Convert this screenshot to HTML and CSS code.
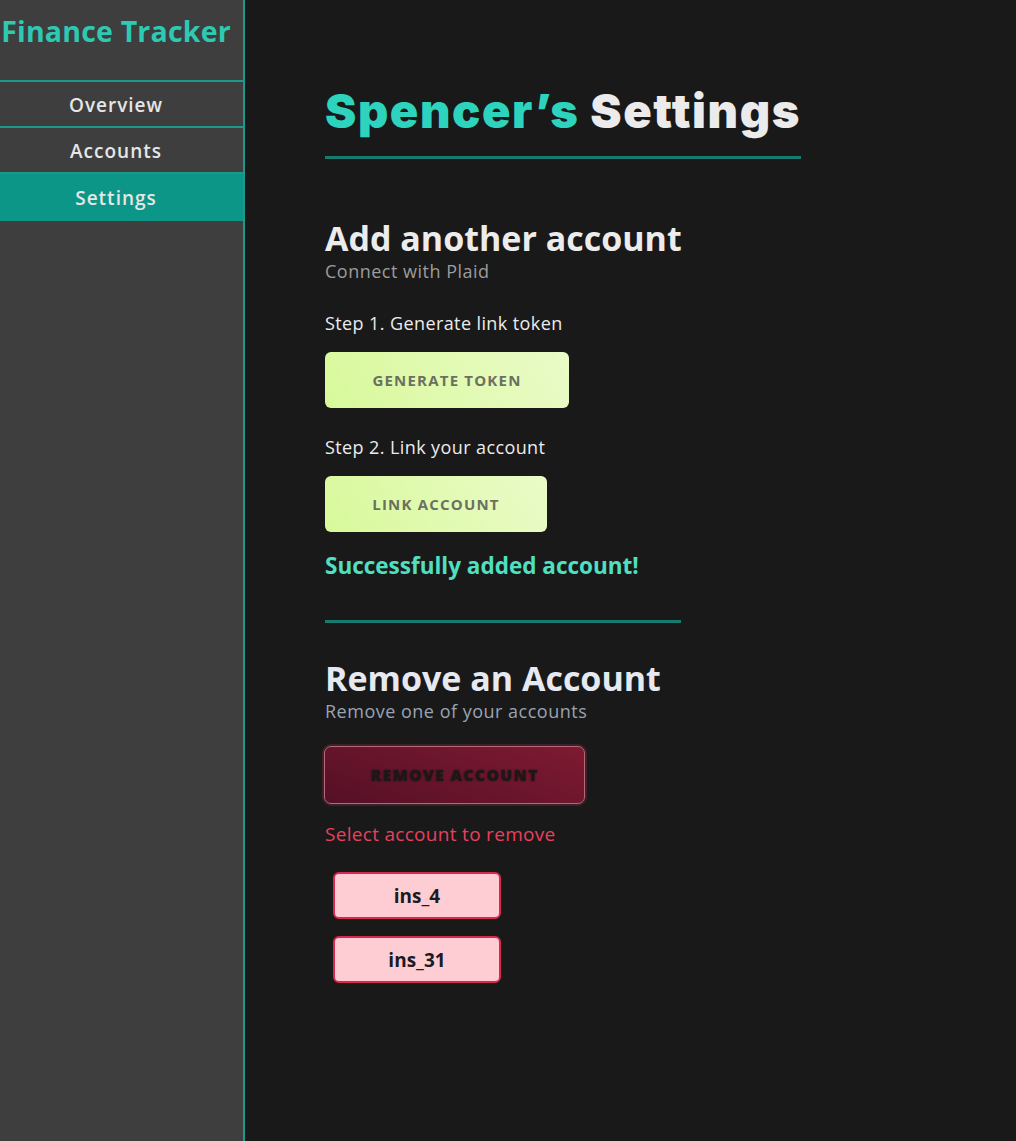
FILE: index.html
```html
<!DOCTYPE html>
<html lang="en">
<head>
<meta charset="utf-8">
<title>Finance Tracker – Settings</title>
<link rel="stylesheet" href="styles.css">
</head>
<body>
<div class="app">
  <aside class="sidebar">
    <div class="brand">Finance Tracker</div>
    <nav class="nav">
      <a class="nav-item">Overview</a>
      <a class="nav-item">Accounts</a>
      <a class="nav-item active">Settings</a>
    </nav>
  </aside>
  <main class="main">
    <h1 class="page-title"><span class="accent">Spencer’s</span> Settings</h1>
    <div class="title-rule"></div>

    <section class="section add">
      <h2 class="section-title">Add another account</h2>
      <p class="section-sub">Connect with Plaid</p>
      <p class="step">Step 1. Generate link token</p>
      <button class="btn btn-green btn-gen">Generate Token</button>
      <p class="step">Step 2. Link your account</p>
      <button class="btn btn-green btn-link">Link Account</button>
      <p class="success">Successfully added account!</p>
    </section>

    <div class="section-rule"></div>

    <section class="section remove">
      <h2 class="section-title light">Remove an Account</h2>
      <p class="section-sub cool">Remove one of your accounts</p>
      <button class="btn btn-red">Remove Account</button>
      <p class="warn">Select account to remove</p>
      <div class="acct-list">
        <button class="acct">ins_4</button>
        <button class="acct">ins_31</button>
      </div>
    </section>
  </main>
</div>
</body>
</html>
```
FILE: styles.css
```css
* { box-sizing: border-box; }
html, body { margin: 0; height: 100%; }
body {
  background: #191919;
  font-family: "Open Sans", "Noto Sans", sans-serif;
  color: #e8e8e8;
}
.app {
  display: flex;
  min-height: 1141px;
}
.sidebar {
  width: 245px;
  flex: none;
  background: #3e3e3e;
  border-right: 2px solid #1a9a8a;
}
.brand {
  height: 82px;
  border-bottom: 2px solid #1a9a8a;
  color: #2ec9b2;
  font-weight: 700;
  font-size: 28.5px;
  text-align: center;
  padding: 12px 11px 0 0;
  white-space: nowrap;
  letter-spacing: 0.2px;
}
.nav { display: flex; flex-direction: column; }
.nav-item {
  height: 46px;
  display: flex;
  align-items: center;
  justify-content: center;
  padding: 2px 11px 0 0;
  color: #e6e6e6;
  font-weight: 600;
  font-size: 19px;
  letter-spacing: 1px;
  border-bottom: 2px solid #1a9a8a;
}
.nav-item.active {
  background: #0b9688;
  border-bottom: none;
  height: 47px;
  padding-top: 0;
}
.main {
  flex: 1;
  padding: 80px 0 0 80px;
}
.page-title {
  margin: 0;
  font-family: Inter, "Noto Sans", sans-serif;
  font-weight: 900;
  font-size: 47px;
  line-height: 62px;
  letter-spacing: 1.6px;
  color: #ebebeb;
}
.accent { color: #2ed3bd; }
.title-rule {
  width: 476px;
  height: 3px;
  background: #167a70;
  margin-top: 14px;
}
.section-title {
  margin: 0;
  font-weight: 700;
  font-size: 34px;
  line-height: 38px;
  color: #ececec;
}
.section-title.light { color: #e6e9f0; }
.add { margin-top: 60px; }
.section-sub {
  margin: 3px 0 0;
  font-size: 18px;
  line-height: 22px;
  letter-spacing: 0.5px;
  color: #9c9c9c;
}
.section-sub.cool { color: #9aa3b2; }
.step {
  margin: 29px 0 17px;
  font-size: 18px;
  line-height: 24px;
  letter-spacing: 0.4px;
  color: #ececec;
}
.btn {
  display: block;
  border: none;
  border-radius: 6px;
  font-family: "Open Sans", sans-serif;
  font-weight: 700;
  font-size: 15px;
  letter-spacing: 1.2px;
  text-transform: uppercase;
  cursor: pointer;
}
.btn-green {
  height: 56px;
  background: linear-gradient(60deg, #d8f99a 0%, #eafbc8 100%);
  color: #6b705f;
}
.btn-gen { width: 244px; }
.btn-link { width: 222px; }
.btn-gen + .step { margin-top: 27px; }
.success {
  margin: 19px 0 0;
  font-weight: 700;
  font-size: 22.5px;
  line-height: 30px;
  color: #4fe0c2;
}
.section-rule {
  width: 356px;
  height: 3px;
  background: #167a70;
  margin-top: 39px;
}
.remove { margin-top: 36px; }
.btn-red {
  margin-top: 24px;
  margin-left: -1px;
  width: 261px;
  height: 58px;
  background: linear-gradient(20deg, #551026 0%, #7e1a31 100%);
  border: 1px solid #b56a7c;
  box-shadow: 0 0 0 2px #3d2028;
  border-radius: 7px;
  color: #1d1719;
  font-weight: 800;
  font-size: 15.5px;
  letter-spacing: 1.5px;
  text-shadow: 0 0 2px rgba(20, 10, 12, 0.7);
}
.warn {
  margin: 17px 0 0;
  font-size: 19px;
  line-height: 26px;
  letter-spacing: 0.3px;
  color: #e8405e;
}
.acct-list {
  display: flex;
  flex-direction: column;
  gap: 17px;
  margin: 25px 0 0 8px;
}
.acct {
  width: 168px;
  height: 47px;
  background: #fecdd4;
  border: 2px solid #d8284f;
  border-radius: 6px;
  font-family: "Open Sans", sans-serif;
  font-weight: 700;
  font-size: 19px;
  color: #1b1b22;
  cursor: pointer;
}
```
